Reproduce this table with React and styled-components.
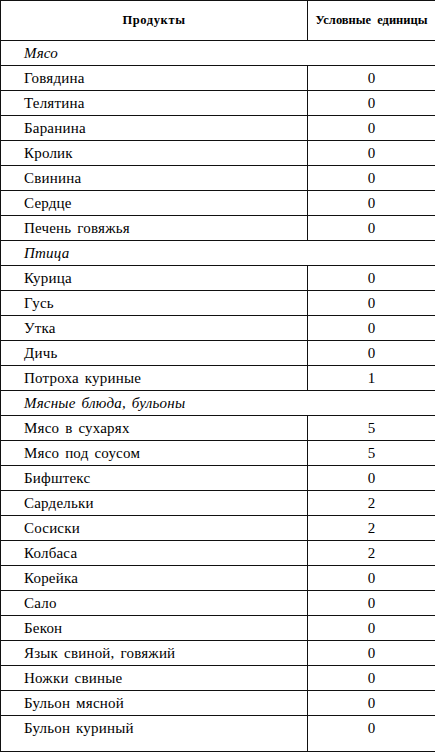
import React from "react"
import styled, { createGlobalStyle } from "styled-components"

const GlobalStyle = createGlobalStyle`
  html, body {
    margin: 0;
    padding: 0;
    background: #fff;
  }
`

const Table = styled.table`
  width: 435px;
  border-collapse: collapse;
  table-layout: fixed;
  font-family: "Liberation Serif", "Times New Roman", serif;
  color: #000;
  font-size: 15px;

  col.name {
    width: 307px;
  }
  col.units {
    width: 128px;
  }
`

const HeadCell = styled.th`
  height: 39px;
  border: 1px solid #111;
  font-size: 12.5px;
  font-weight: bold;
  text-align: center;
  vertical-align: middle;
  padding: 0 4px;
  word-spacing: 3px;
  letter-spacing: ${props => (props.$wide ? "0.6px" : "0")};
`

const Cell = styled.td`
  height: ${props => (props.$tall ? "36px" : "25px")};
  border: 1px solid #111;
  padding: 3px 0 0 ${props => (props.$num ? "0" : "23px")};
  box-sizing: border-box;
  vertical-align: top;
  line-height: 19px;
  text-align: ${props => (props.$num ? "center" : "left")};
  word-spacing: 2px;
  letter-spacing: 0.2px;
  font-style: ${props => (props.$section ? "italic" : "normal")};
  white-space: nowrap;
`

const rows = [
  { section: "Мясо" },
  { name: "Говядина", units: 0 },
  { name: "Телятина", units: 0 },
  { name: "Баранина", units: 0 },
  { name: "Кролик", units: 0 },
  { name: "Свинина", units: 0 },
  { name: "Сердце", units: 0 },
  { name: "Печень говяжья", units: 0 },
  { section: "Птица" },
  { name: "Курица", units: 0 },
  { name: "Гусь", units: 0 },
  { name: "Утка", units: 0 },
  { name: "Дичь", units: 0 },
  { name: "Потроха куриные", units: 1 },
  { section: "Мясные блюда, бульоны" },
  { name: "Мясо в сухарях", units: 5 },
  { name: "Мясо под соусом", units: 5 },
  { name: "Бифштекс", units: 0 },
  { name: "Сардельки", units: 2 },
  { name: "Сосиски", units: 2 },
  { name: "Колбаса", units: 2 },
  { name: "Корейка", units: 0 },
  { name: "Сало", units: 0 },
  { name: "Бекон", units: 0 },
  { name: "Язык свиной, говяжий", units: 0 },
  { name: "Ножки свиные", units: 0 },
  { name: "Бульон мясной", units: 0 },
  { name: "Бульон куриный", units: 0 },
]

export default function App() {
  return (
    <>
      <GlobalStyle />
      <Table>
        <colgroup>
          <col className="name" />
          <col className="units" />
        </colgroup>
        <thead>
          <tr>
            <HeadCell $wide>Продукты</HeadCell>
            <HeadCell>Условные единицы</HeadCell>
          </tr>
        </thead>
        <tbody>
          {rows.map((row, i) => {
            const tall = i === rows.length - 1
            if (row.section)
              return (
                <tr key={i}>
                  <Cell colSpan={2} $section>
                    {row.section}
                  </Cell>
                </tr>
              )
            return (
              <tr key={i}>
                <Cell $tall={tall}>{row.name}</Cell>
                <Cell $num $tall={tall}>
                  {row.units}
                </Cell>
              </tr>
            )
          })}
        </tbody>
      </Table>
    </>
  )
}
